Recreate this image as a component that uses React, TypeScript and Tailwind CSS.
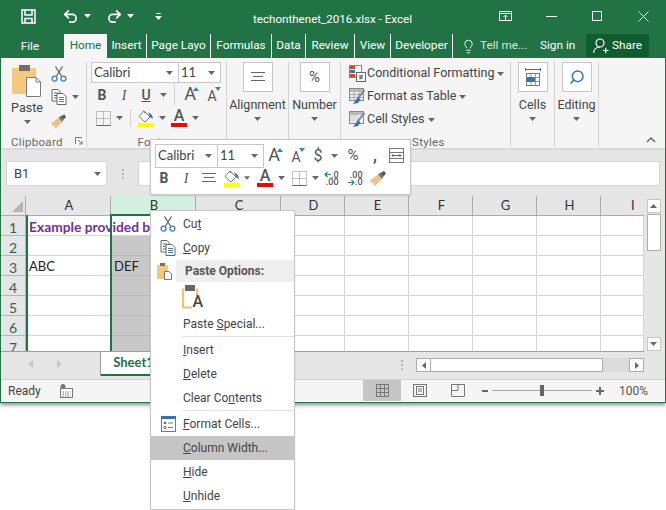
import React from "react";
import { Undo2, Redo2, Lightbulb, Search } from "lucide-react";

const Caret = ({ c = "#666" }: { c?: string }) => (
  <svg width="7" height="4" viewBox="0 0 7 4"><polygon points="0,0 7,0 3.5,4" fill={c} /></svg>
);

const Slot = ({ className = "", children }: { className?: string; children?: React.ReactNode }) => (
  <div className={`flex shrink-0 items-center justify-center ${className}`}>{children}</div>
);

const Scissors = ({ s = 16 }: { s?: number }) => (
  <svg width={s} height={s} viewBox="0 0 16 16" fill="none">
    <path d="M5.5 10 L11.5 0.5 M10.5 10 L4.5 0.5" stroke="#6a6a6a" strokeWidth="1.4" />
    <circle cx="3.6" cy="12.6" r="2.5" stroke="#3f7fb8" strokeWidth="1.3" />
    <circle cx="12.4" cy="12.6" r="2.5" stroke="#3f7fb8" strokeWidth="1.3" />
  </svg>
);

const CopyIcon = () => (
  <svg width="16" height="16" viewBox="0 0 16 16" fill="none">
    <path d="M1 .5H7L9 2.5V12H1Z" fill="#fff" stroke="#666" />
    <path d="M3 4H7M3 6.5H7M3 9H7" stroke="#666" />
    <path d="M6 4.5H12L15 7.5V15.5H6Z" fill="#fff" stroke="#666" />
    <path d="M8 8.5H13M8 10.5H13M8 12.5H13" stroke="#3f7fb8" />
  </svg>
);

const Brush = () => (
  <svg width="17" height="15" viewBox="0 0 17 15">
    <polygon points="0,9.5 8,3.5 12,8 5,15 3,13 4,11 1.500,12" fill="#e8c48c" />
    <polygon points="8,3.500 10.500,1.500 13.500,5.500 12,8" fill="#777" />
    <polygon points="10.500,2 14,0 16,2.500 13.500,5.500" fill="#555" />
  </svg>
);

const Bucket = () => (
  <div className="flex flex-col items-center">
    <svg width="16" height="13" viewBox="0 0 16 13" fill="none">
      <path d="M6 1 L12 7 L7 12 L1 6.500Z" fill="#fff" stroke="#777" />
      <path d="M5 .5 L7 3" stroke="#777" />
      <path d="M10 2 L14 5 L15 9 L12 7Z" fill="#2f75b5" />
    </svg>
    <div className="h-[4px] w-[16px] bg-[#ffff00]" />
  </div>
);

const FontColor = () => (
  <div className="flex flex-col items-center">
    <span className="h-[12px] text-[16px] leading-[12px] font-medium text-[#555]">A</span>
    <div className="mt-px h-[4px] w-[16px] bg-[#ff0000]" />
  </div>
);

const Borders = () => (
  <svg width="15" height="15" viewBox="0 0 15 15" fill="none" stroke="#888" strokeDasharray="1 1">
    <rect x=".5" y=".5" width="14" height="14" />
    <path d="M7.500 .5V14.500M.5 7.500H14.500" />
    <path d="M.5 14.500H14.500" stroke="#666" strokeDasharray="none" />
  </svg>
);

const SizeA = ({ big, up }: { big?: boolean; up?: boolean }) => (
  <div className="relative flex h-[16px] w-[18px] items-end justify-center">
    <span className={`leading-none text-[#555] ${big ? "text-[18px]" : "text-[14px]"}`}>A</span>
    <svg className="absolute top-0 right-0" width="6" height="4" viewBox="0 0 6 4">
      <polygon points={up ? "0,4 6,4 3,0" : "0,0 6,0 3,4"} fill="#3f7fb8" />
    </svg>
  </div>
);

const BigBtn = ({ children, label }: { children: React.ReactNode; label: string }) => (
  <div className="flex flex-col items-center">
    <div className="flex h-[30px] w-[30px] items-center justify-center border border-[#c6c6c6] bg-white">{children}</div>
    <div className="mt-[4px] h-[18px] text-[12.500px] leading-[18px] whitespace-nowrap">{label}</div>
    <div className="mt-[3px] flex h-[4px]"><Caret /></div>
  </div>
);

const StyleRow = ({ icon, label }: { icon: React.ReactNode; label: string }) => (
  <div className="flex h-[23px] items-center">
    <Slot className="w-[19px]">{icon}</Slot>
    <span className="text-[12.500px] whitespace-nowrap">{label}</span>
    <span className="ml-[3px] flex"><Caret /></span>
  </div>
);

const CondIcon = () => (
  <svg width="17" height="17" viewBox="0 0 17 17" fill="none">
    <rect x=".5" y=".5" width="12" height="12" fill="#fff" stroke="#888" />
    <rect x="1" y="1" width="5" height="3" fill="#d24726" />
    <rect x="1" y="5" width="5" height="3" fill="#2f75b5" />
    <rect x="1" y="9" width="5" height="3" fill="#d24726" />
    <rect x="7.500" y="7.500" width="9" height="9" fill="#fff" stroke="#666" />
    <path d="M10 11H14M10 13H14M13 9.500L11 14.500" stroke="#555" />
  </svg>
);

const TableIcon = ({ styles }: { styles?: boolean }) => (
  <svg width="17" height="17" viewBox="0 0 17 17" fill="none">
    <rect x=".5" y=".5" width="14" height="12" fill={styles ? "#fff" : "#eee"} stroke="#888" />
    <rect x="1" y="1" width="13" height="3" fill="#bbb" />
    {styles ? <rect x="1" y="4" width="8" height="7" fill="#ddd" /> : <path d="M5 1V12M10 1V12M1 6.500H14M1 9.500H14" stroke="#aaa" />}
    <path d="M15.500 2 L9 10" stroke="#888" strokeWidth="2" />
    <path d="M9 9 L11.500 11.500 L9 15 L4 16Z" fill="#2f75b5" />
  </svg>
);

const CellsIcon = () => (
  <svg width="16" height="20" viewBox="0 0 16 20" fill="none">
    <path d="M.5 1V4M15.500 1V4M.5 2.500H15.500" stroke="#2f75b5" />
    <rect x="1.500" y="6.500" width="13" height="12" fill="#fff" stroke="#777" />
    <path d="M1.500 10.500H14.500M1.500 14.500H14.500M6 6.500V18.500M10.500 6.500V18.500" stroke="#999" />
    <rect x="2" y="10" width="8" height="5" fill="#2f75b5" />
  </svg>
);

const DecInc = ({ inc }: { inc?: boolean }) => (
  <div className="relative h-[15px] w-[15px] text-[9px] leading-[8px] font-medium text-[#555]">
    <span className="absolute top-0 right-0">{inc ? ".0" : ".00"}</span>
    <span className="absolute right-0 bottom-0">{inc ? ".00" : ".0"}</span>
    <svg className={`absolute left-0 ${inc ? "top-0" : "bottom-0"}`} width="7" height="7" viewBox="0 0 7 7" fill="none" stroke="#2f75b5" strokeWidth="1.200">
      {inc ? <path d="M7 3.500H1M3.500 1L1 3.500L3.500 6" /> : <path d="M0 3.500H6M3.500 1L6 3.500L3.500 6" />}
    </svg>
  </div>
);

const Group = ({ className, label, labelClass = "text-center", children }: { className: string; label: string; labelClass?: string; children: React.ReactNode }) => (
  <div className={`relative flex h-[85px] shrink-0 flex-col border-r border-[#d2d2d2] ${className}`}>
    <div className="h-[73px]">{children}</div>
    <div className={`h-[12px] text-[11.500px] leading-[14px] tracking-[.3px] text-[#666] whitespace-nowrap ${labelClass}`}>{label}</div>
  </div>
);

const Ribbon = () => (
  <div className="flex h-[92px] border-b-2 border-[#d9d9d9] bg-[#f5f5f5] pt-[4px] text-[#444]">
    <Group className="w-[86px]" label="Clipboard" labelClass="pl-[10px] text-left">
      <div className="flex">
        <div className="flex w-[50px] flex-col items-center pt-[3px] pl-[2px]">
          <svg width="30" height="32" viewBox="0 0 30 32" fill="none">
            <rect x="0" y="3" width="24" height="26" fill="#f2c97d" />
            <rect x="7" y="0" width="11" height="6" fill="#6f6f6f" />
            <path d="M14.500 12.500H24L28.500 17V31.500H14.500Z" fill="#fff" stroke="#7a7a7a" />
            <path d="M24 12.500V17H28.500" stroke="#7a7a7a" />
          </svg>
          <div className="mt-[2px] h-[18px] text-[12.500px] leading-[18px]">Paste</div>
          <div className="mt-[3px] flex"><Caret /></div>
        </div>
        <div className="flex flex-col">
          <Slot className="h-[23px] w-[16px]"><Scissors /></Slot>
          <div className="flex h-[24px] items-center">
            <Slot className="w-[16px]"><CopyIcon /></Slot>
            <span className="ml-[5px] flex"><Caret /></span>
          </div>
          <Slot className="h-[24px] w-[16px]"><Brush /></Slot>
        </div>
      </div>
      <svg className="absolute right-[3px] bottom-[2px]" width="8" height="8" viewBox="0 0 8 8" fill="none" stroke="#777">
        <path d="M.5 7V.5H7M3 3L7 7M7 4V7H4" />
      </svg>
    </Group>
    <Group className="w-[140px]" label="Font" labelClass="pr-[14px] text-center">
      <div className="pl-[4px]">
        <div className="flex [font-family:Lato,sans-serif] text-[13px]">
          <div className="flex h-[21px] w-[88px] items-center justify-between border border-[#c6c6c6] bg-white pr-[5px] pl-[2px]"><span>Calibri</span><Caret /></div>
          <div className="flex h-[21px] w-[42px] items-center justify-between border border-l-0 border-[#c6c6c6] bg-white pr-[5px] pl-[2px]"><span>11</span><Caret /></div>
        </div>
        <div className="flex h-[24px] items-center text-[#555]">
          <Slot className="w-[22px] text-[14px] font-bold">B</Slot>
          <Slot className="w-[22px] text-[14px] italic [font-family:'Liberation_Serif',serif]">I</Slot>
          <Slot className="w-[22px] text-[14px] font-medium underline">U</Slot>
          <Slot className="w-[12px]"><Caret /></Slot>
          <div className="ml-[5px] h-[22px] w-px self-start bg-[#d2d2d2]" />
          <Slot className="ml-[4px] w-[22px]"><SizeA big up /></Slot>
          <Slot className="w-[22px]"><SizeA /></Slot>
        </div>
        <div className="flex h-[22px] items-center">
          <Slot className="w-[24px]"><Borders /></Slot>
          <Slot className="w-[8px]"><Caret /></Slot>
          <div className="ml-[7px] h-[18px] w-px bg-[#d2d2d2]" />
          <Slot className="ml-[4px] w-[22px]"><Bucket /></Slot>
          <Slot className="w-[11px]"><Caret /></Slot>
          <Slot className="w-[22px]"><FontColor /></Slot>
          <Slot className="w-[10px]"><Caret /></Slot>
        </div>
      </div>
    </Group>
    <Group className="w-[62px]" label="">
      <BigBtn label="Alignment">
        <svg width="16" height="12" viewBox="0 0 16 12" stroke="#666"><path d="M1 1.500H15M3 5.500H13M1 9.500H15" /></svg>
      </BigBtn>
    </Group>
    <Group className="w-[52px]" label="">
      <BigBtn label="Number"><span className="text-[15px] text-[#555]">%</span></BigBtn>
    </Group>
    <Group className="w-[170px]" label="Styles" labelClass="pl-[71px] text-left">
      <div className="pl-[7px]">
        <StyleRow icon={<CondIcon />} label="Conditional Formatting" />
        <StyleRow icon={<TableIcon />} label="Format as Table" />
        <StyleRow icon={<TableIcon styles />} label="Cell Styles" />
      </div>
    </Group>
    <Group className="w-[44px]" label="">
      <BigBtn label="Cells"><CellsIcon /></BigBtn>
    </Group>
    <Group className="w-[44px]" label="">
      <BigBtn label="Editing"><Search size={16} color="#2f75b5" strokeWidth={2.2} className="-scale-x-100" /></BigBtn>
    </Group>
    <div className="flex flex-1 items-end justify-end pr-[9px] pb-[5px]">
      <svg width="10" height="6" viewBox="0 0 10 6" fill="none" stroke="#666" strokeWidth="1.500"><path d="M1 5L5 1L9 5" /></svg>
    </div>
  </div>
);

const Tab = ({ className, label }: { className: string; label: string }) => (
  <div className={`flex h-[24px] shrink-0 items-center justify-center border-r border-white ${className}`}>{label}</div>
);

const MiniToolbar = () => (
  <div className="absolute top-[139px] left-[150px] z-40 flex h-[56px] w-[261px] flex-col border border-[#c6c6c6] bg-white pt-[3px] pl-[4px] text-[#444] shadow-[0_1px_2px_rgba(0,0,0,.15)]">
    <div className="flex h-[25px] items-center">
      <div className="flex [font-family:Lato,sans-serif] text-[13px]">
        <div className="flex h-[24px] w-[63px] items-center justify-between border border-[#c6c6c6] pr-[5px] pl-[2px]"><span>Calibri</span><Caret /></div>
        <div className="flex h-[24px] w-[46px] items-center justify-between border border-l-0 border-[#c6c6c6] pr-[5px] pl-[2px]"><span>11</span><Caret /></div>
      </div>
      <Slot className="ml-[-1px] w-[22px]"><SizeA big up /></Slot>
      <Slot className="w-[22px]"><SizeA /></Slot>
      <Slot className="w-[22px] text-[16px] text-[#555]">$</Slot>
      <Slot className="w-[10px]"><Caret /></Slot>
      <Slot className="ml-[3px] w-[22px] text-[15px] text-[#555]">%</Slot>
      <Slot className="w-[22px] text-[16px] font-bold text-[#555]">,</Slot>
      <Slot className="w-[20px]">
        <svg width="15" height="15" viewBox="0 0 15 15" fill="none" stroke="#777">
          <rect x=".5" y=".5" width="14" height="14" />
          <path d="M.5 4.500H14.500M.5 10.500H14.500" />
          <path d="M3 7.500H12M4.500 6L3 7.500L4.500 9M10.500 6L12 7.500L10.500 9" stroke="#2f75b5" />
        </svg>
      </Slot>
    </div>
    <div className="flex h-[20px] items-center">
      <Slot className="ml-[-1px] w-[20px] text-[14px] font-bold text-[#555]">B</Slot>
      <Slot className="w-[24px] text-[14px] italic text-[#555] [font-family:'Liberation_Serif',serif]">I</Slot>
      <Slot className="w-[22px]">
        <svg width="16" height="12" viewBox="0 0 16 12" stroke="#666"><path d="M1 1.500H15M3 5.500H13M1 9.500H15" /></svg>
      </Slot>
      <Slot className="w-[24px]"><Bucket /></Slot>
      <Slot className="w-[6px]"><Caret /></Slot>
      <Slot className="ml-[3px] w-[24px]"><FontColor /></Slot>
      <Slot className="w-[8px]"><Caret /></Slot>
      <Slot className="ml-[2px] w-[24px]"><Borders /></Slot>
      <Slot className="w-[8px]"><Caret /></Slot>
      <Slot className="ml-[1px] w-[22px]"><DecInc inc /></Slot>
      <Slot className="ml-[1px] w-[24px]"><DecInc /></Slot>
      <Slot className="w-[22px]"><Brush /></Slot>
    </div>
  </div>
);

const MenuItem = ({ icon, hot, children }: { icon?: React.ReactNode; hot?: boolean; children: React.ReactNode }) => (
  <div className={`flex h-[24px] items-center text-[#444] ${hot ? "bg-[#c6c6c6]" : ""}`}>
    <Slot className="w-[32px] pl-[2px]">{icon}</Slot>
    <span className="text-[12px] whitespace-nowrap">{children}</span>
  </div>
);

const ContextMenu = () => (
  <div className="absolute top-[210px] left-[150px] z-50 w-[145px] border border-[#c6c6c6] bg-white py-px shadow-[0_1px_2px_rgba(0,0,0,.1)]">
    <MenuItem icon={<Scissors />}>Cu<u>t</u></MenuItem>
    <MenuItem icon={<CopyIcon />}><u>C</u>opy</MenuItem>
    <div className="flex h-[22px] items-center">
      <Slot className="w-[25px] pl-[2px]">
        <svg width="15" height="17" viewBox="0 0 15 17" fill="none">
          <rect x="0" y="2" width="11" height="14" fill="#f2c97d" />
          <rect x="3" y="0" width="5" height="3" fill="#6f6f6f" />
          <path d="M7.500 8.500H12L14.500 11V16.500H7.500Z" fill="#fff" stroke="#777" />
        </svg>
      </Slot>
      <div className="flex h-[22px] flex-1 items-center bg-[#eeeeee] pl-[9px] text-[12px] font-bold text-[#555]">Paste Options:</div>
    </div>
    <div className="flex h-[30px] items-center pl-[31px]">
      <div className="relative h-[24px] w-[21px]">
        <svg width="20" height="24" viewBox="0 0 20 24" fill="none">
          <path d="M1 3.500V22.500H10M15 3.500V11" stroke="#efc27a" strokeWidth="2.200" />
          <rect x="3" y="0" width="10" height="6" fill="#666" />
        </svg>
        <span className="absolute right-0 bottom-[-2px] text-[16px] leading-[18px] font-medium text-[#444]">A</span>
      </div>
    </div>
    <MenuItem>Paste <u>S</u>pecial...</MenuItem>
    <div className="ml-[32px] h-px bg-[#e2e2e2]" />
    <div className="h-px" />
    <MenuItem><u>I</u>nsert</MenuItem>
    <MenuItem><u>D</u>elete</MenuItem>
    <MenuItem>Clear Co<u>n</u>tents</MenuItem>
    <div className="ml-[32px] h-px bg-[#e2e2e2]" />
    <div className="h-px" />
    <MenuItem
      icon={
        <svg width="15" height="16" viewBox="0 0 15 16" fill="none">
          <rect x=".5" y=".5" width="14" height="15" fill="#fff" stroke="#777" />
          <rect x="0" y="0" width="15" height="3" fill="#2f75b5" />
          <path d="M7 7H12M7 11.500H12" stroke="#777" />
          <circle cx="4" cy="7" r="1.300" fill="#666" />
          <circle cx="4" cy="11.500" r="1.200" stroke="#666" />
        </svg>
      }
    >
      <u>F</u>ormat Cells...
    </MenuItem>
    <MenuItem hot><u>C</u>olumn Width...</MenuItem>
    <MenuItem><u>H</u>ide</MenuItem>
    <MenuItem><u>U</u>nhide</MenuItem>
  </div>
);

const cols = ["A", "B", "C", "D", "E", "F", "G", "H"];
const rows = [1, 2, 3, 4, 5, 6, 7];

const Sheet = () => (
  <div className="flex h-[156px] [font-family:Lato,sans-serif] text-[13px]">
    <div className="relative grid w-[643px] shrink-0 grid-cols-[25px_85px_85px_85px_64px_64px_64px_64px_64px_43px] grid-rows-[20px_20px_20px_20px_20px_20px_20px_15px] overflow-hidden border-b border-[#9e9e9e] bg-white">
      <div className="relative border-r border-b border-[#ababab] bg-[#e6e6e6]">
        <svg className="absolute right-[2px] bottom-[3px]" width="11" height="11" viewBox="0 0 11 11"><polygon points="11,0 11,11 0,11" fill="#b5b5b5" /></svg>
      </div>
      {cols.map((c) => (
        <div key={c} className={`flex items-center justify-center border-r border-b border-[#ababab] pl-[2px] text-[#333] ${c === "B" ? "bg-[#d3f0e0]" : "bg-[#e6e6e6]"}`}>{c}</div>
      ))}
      <div className="flex items-center border-b border-[#ababab] bg-[#e6e6e6] pl-[30px] text-[#333]">I</div>
      {rows.map((r) => (
        <React.Fragment key={r}>
          <div className="flex h-[20px] items-center justify-center border-r border-b border-[#b5b5b5] bg-[#e6e6e6] pt-[3px] text-[14px] text-[#37614d]">{r}</div>
          {["A", "B", "C", "D", "E", "F", "G", "H", "I"].map((c) => {
            const sel = c === "B" && r > 1;
            return (
              <div key={c} className={`relative flex h-[20px] items-center border-r border-b pt-[3px] pl-[3px] text-[#222] ${sel ? "border-[#b8b8b8] bg-[#c8c8c8]" : "border-[#d4d4d4] bg-white"} ${r === 1 && c === "A" ? "border-r-0" : ""} ${r === 1 && c === "B" ? "border-r-0" : ""}`}>
                {r === 1 && c === "A" ? <span className="absolute left-[3px] z-10 text-[13.800px] font-bold whitespace-nowrap text-[#7030a0]">Example provided by TechOnTheNet</span> : null}
                {r === 3 && c === "A" ? "ABC" : null}
                {r === 3 && c === "B" ? "DEF" : null}
              </div>
            );
          })}
        </React.Fragment>
      ))}
      <div className="absolute top-[19px] bottom-0 left-[25px] z-20 w-[2px] bg-[#217346]" />
      <div className="absolute top-[19px] bottom-0 left-[109px] z-20 w-[2px] bg-[#217346]" />
      <div className="absolute top-[18px] left-[109px] z-20 h-[2px] w-[87px] bg-[#217346]" />
    </div>
    <div className="flex flex-1 flex-col items-center bg-[#e6e6e6] pt-[3px] pr-[2px]">
      <div className="flex h-[14px] w-[14px] items-center justify-center border border-[#c6c6c6] bg-white"><svg width="7" height="4" viewBox="0 0 7 4"><polygon points="0,4 7,4 3.500,0" fill="#666" /></svg></div>
      <div className="mt-px h-[37px] w-[14px] border border-[#ababab] bg-white" />
      <div className="flex-1" />
      <div className="mb-px flex h-[14px] w-[14px] items-center justify-center border border-[#c6c6c6] bg-white"><Caret /></div>
    </div>
  </div>
);

const TabsRow = () => (
  <div className="flex h-[27px] bg-[#e6e6e6]">
    <div className="flex h-[24px] w-[100px] shrink-0 items-center border-r border-[#9e9e9e] pl-[27px]">
      <svg width="5" height="8" viewBox="0 0 5 8"><polygon points="5,0 5,8 0,4" fill="#c6c6c6" /></svg>
      <svg className="ml-[24px]" width="5" height="8" viewBox="0 0 5 8"><polygon points="0,0 0,8 5,4" fill="#c6c6c6" /></svg>
    </div>
    <div className="flex h-[24px] w-[60px] shrink-0 items-center justify-center overflow-hidden border-b-2 border-[#217346] bg-white pl-[5px] [font-family:Lato,sans-serif] text-[13px] font-bold text-[#217346]">Sheet1</div>
    <div className="flex flex-1 items-start pt-[6px] pl-[240px]">
      <div className="mr-[13px] flex h-[14px] w-[2px] flex-col justify-between py-[2px]">
        <span className="h-[2px] bg-[#b5b5b5]" /><span className="h-[2px] bg-[#b5b5b5]" /><span className="h-[2px] bg-[#b5b5b5]" />
      </div>
      <div className="flex h-[14px] w-[15px] items-center justify-center border border-[#ababab] bg-white"><svg width="4" height="7" viewBox="0 0 4 7"><polygon points="4,0 4,7 0,3.500" fill="#666" /></svg></div>
      <div className="h-[14px] w-[172px] border-y border-r border-[#ababab] bg-white" />
      <div className="h-[14px] w-[26px] bg-[#dcdcdc]" />
      <div className="flex h-[14px] w-[15px] items-center justify-center border border-[#ababab] bg-white"><svg width="4" height="7" viewBox="0 0 4 7"><polygon points="0,0 0,7 4,3.500" fill="#666" /></svg></div>
    </div>
  </div>
);

const StatusBar = () => (
  <div className="flex h-[22px] items-center border-t border-[#d2d2d2] bg-[#f5f5f5] text-[12px] text-[#444]">
    <span className="ml-[7px] w-[52px]">Ready</span>
    <svg width="13" height="14" viewBox="0 0 13 14" fill="none">
      <circle cx="3" cy="2.500" r="2.500" fill="#777" />
      <rect x=".5" y="4.500" width="12" height="9" fill="#fff" stroke="#777" />
      <path d="M2.500 8H10.500M2.500 10H10.500M2.500 12H10.500" stroke="#777" strokeDasharray="1.500 1" />
    </svg>
    <div className="flex-1" />
    <div className="flex h-[21px] w-[38px] items-center justify-center bg-[#c6c6c6]">
      <svg width="13" height="13" viewBox="0 0 13 13" fill="none" stroke="#777"><rect x=".5" y=".5" width="12" height="12" /><path d="M4.500 .5V12.500M8.500 .5V12.500M.5 4.500H12.500M.5 8.500H12.500" /></svg>
    </div>
    <Slot className="w-[38px]">
      <svg width="14" height="13" viewBox="0 0 14 13" fill="none" stroke="#777"><rect x=".5" y=".5" width="13" height="12" /><rect x="3.500" y="2.500" width="7" height="8" /><path d="M5 5H9M5 7H9" /></svg>
    </Slot>
    <Slot className="w-[38px]">
      <svg width="14" height="13" viewBox="0 0 14 13" fill="none" stroke="#777"><path d="M.5 .5H13.500V12.500H.5ZM.5 6.500H7M7 .5V6.500" /></svg>
    </Slot>
    <div className="ml-[5px] h-[2px] w-[6px] bg-[#666]" />
    <div className="relative ml-[4px] h-px w-[100px] bg-[#a6a6a6]">
      <div className="absolute top-[-5px] left-[48px] h-[11px] w-[4px] bg-[#666]" />
    </div>
    <svg className="ml-[4px]" width="8" height="8" viewBox="0 0 8 8"><path d="M3 0H5V3H8V5H5V8H3V5H0V3H3Z" fill="#666" /></svg>
    <span className="mr-[19px] ml-[15px] w-[27px] text-[#555]">100%</span>
  </div>
);

export default function App() {
  return (
    <div className="relative h-[510px] w-[666px] overflow-hidden bg-white [font-family:Roboto,sans-serif]">
      <div className="flex h-[403px] flex-col border-x border-b border-[#217346] shadow-[0_2px_4px_rgba(0,0,0,.45)]">
        <div className="-mx-px flex h-[34px] shrink-0 bg-[#217346] text-white">
          <div className="flex h-[32px] w-[253px] shrink-0 items-center">
            <Slot className="ml-[20px] w-[16px]">
              <svg width="15" height="15" viewBox="0 0 15 15" fill="none" stroke="#fff" strokeWidth="1.500">
                <path d="M1 1H14V14H1Z" />
                <path d="M4 1V6H11V1" />
                <path d="M4 14V9.500H11V14" />
              </svg>
            </Slot>
            <Slot className="ml-[25px] w-[18px]"><Undo2 size={17} strokeWidth={2.4} /></Slot>
            <Slot className="ml-[4px] w-[9px]"><Caret c="#fff" /></Slot>
            <Slot className="ml-[13px] w-[18px]"><Redo2 size={17} strokeWidth={2.4} /></Slot>
            <Slot className="ml-[3px] w-[9px]"><Caret c="#fff" /></Slot>
            <Slot className="ml-[19px] w-[9px]">
              <svg width="7" height="7" viewBox="0 0 7 7" fill="#fff"><rect x="1" y="0" width="5" height="1" /><polygon points="0,3 7,3 3.500,7" /></svg>
            </Slot>
          </div>
          <div className="flex-1 pt-[10px] text-[11.600px] leading-[18px] whitespace-nowrap">techonthenet_2016.xlsx - Excel</div>
          <div className="flex h-[32px]">
            <Slot className="w-[46px]">
              <svg width="13" height="10" viewBox="0 0 13 10" fill="none" stroke="#fff"><rect x=".5" y=".5" width="12" height="9" /><path d="M.5 2.500H12.500M6.500 9V4.500M4.500 6L6.500 4L8.500 6" /></svg>
            </Slot>
            <Slot className="w-[46px]"><div className="h-px w-[11px] bg-white" /></Slot>
            <Slot className="w-[46px]"><div className="h-[10px] w-[10px] border border-white" /></Slot>
            <Slot className="w-[46px]">
              <svg width="11" height="11" viewBox="0 0 11 11" stroke="#fff"><path d="M.5 .5L10.500 10.500M10.500 .5L.5 10.500" /></svg>
            </Slot>
          </div>
        </div>
        <div className="-mx-px flex h-[24px] shrink-0 bg-[#217346] text-[11.800px] text-white">
          <Slot className="h-[24px] w-[64px] pt-[1px] pr-[4px]">File</Slot>
          <Slot className="h-[24px] w-[43px] bg-[#f5f5f5] text-[#217346]">Home</Slot>
          <Tab className="w-[40px]" label="Insert" />
          <Tab className="w-[64px]" label="Page Layo" />
          <Tab className="w-[61px]" label="Formulas" />
          <Tab className="w-[34px]" label="Data" />
          <Tab className="w-[49px]" label="Review" />
          <Tab className="w-[36px]" label="View" />
          <Tab className="w-[62px]" label="Developer" />
          <Slot className="ml-[6px] w-[18px]"><Lightbulb size={15} strokeWidth={1.4} /></Slot>
          <span className="ml-[3px] flex w-[60px] items-center text-[#d8e8df]">Tell me...</span>
          <span className="flex w-[46px] items-center">Sign in</span>
          <div className="flex h-[23px] w-[63px] items-center gap-[3px] bg-[#0f5c2e] pl-[6px]">
            <svg width="17" height="17" viewBox="0 0 17 17" fill="none" stroke="#fff" strokeWidth="1.200">
              <circle cx="8" cy="6" r="4" />
              <path d="M1.500 16C2 12.500 4.500 10 8 10M11 13.500H16.500M13.700 10.700V16.200" />
            </svg>
            <span>Share</span>
          </div>
        </div>
        <Ribbon />
        <div className="flex h-[46px] shrink-0 bg-[#e6e6e6] pt-[11px] pr-[5px] pl-[5px]">
          <div className="flex h-[25px] w-[101px] items-center justify-between border border-[#d4d4d4] bg-white pr-[5px] pl-[7px] text-[13px] text-[#444]">
            <span>B1</span><Caret />
          </div>
          <div className="flex h-[25px] w-[31px] flex-col items-center justify-center gap-[2px]">
            <span className="h-[2px] w-[2px] bg-[#b5b5b5]" /><span className="h-[2px] w-[2px] bg-[#b5b5b5]" /><span className="h-[2px] w-[2px] bg-[#b5b5b5]" />
          </div>
          <div className="h-[25px] flex-1 border border-[#d4d4d4] bg-white" />
        </div>
        <Sheet />
        <TabsRow />
        <StatusBar />
      </div>
      <MiniToolbar />
      <ContextMenu />
    </div>
  );
}
